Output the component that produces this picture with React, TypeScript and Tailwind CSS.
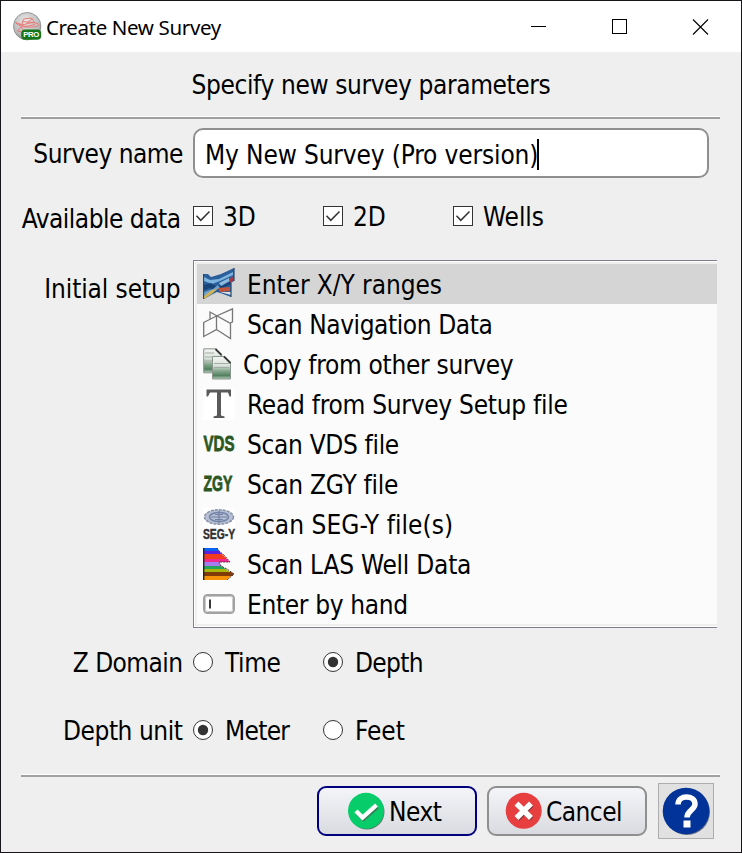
import type { ReactNode } from 'react';

type Row = { label: string; icon: ReactNode; text: string };

const FONT = "font-['DejaVu_Sans_Condensed','DejaVu_Sans',sans-serif] [font-stretch:75%] text-[26px] whitespace-nowrap leading-none";

function AppIcon() {
  return (
    <svg width="29" height="29" viewBox="0 0 29 29">
      <defs>
        <radialGradient id="ball" cx="0.45" cy="0.3" r="0.75">
          <stop offset="0" stopColor="#e8e8e8" />
          <stop offset="0.7" stopColor="#b9babb" />
          <stop offset="1" stopColor="#858788" />
        </radialGradient>
      </defs>
      <circle cx="14.2" cy="14.2" r="13.7" fill="url(#ball)" stroke="#858787" strokeWidth="0.8" />
      <path
        d="M2.500 10.500c5 2 8 2.500 11 1.500s7-2 11-.5c2 1 2 2 0 2.500-4 1.500-8 1-12 1s-8-2-10-4.500zM9 12l1.500-5 3.500-.5 5-.5 2.500 5M9.500 9.500l11 1M8 15l-3.500 4 4 1M13 12l6-5M6 12.500l7 2 9-2M8 15l3 4"
        fill="none"
        stroke="#ee6663"
        strokeWidth="0.8"
      />
      <rect x="8.2" y="17.4" width="20" height="10.4" rx="4" fill="#14751b" />
      <text x="18.3" y="25.3" textAnchor="middle" fontFamily="Liberation Sans, sans-serif" fontWeight="700" fontSize="7.8" fill="#fff" textLength="16">
        PRO
      </text>
    </svg>
  );
}

function RangesIcon() {
  return (
    <svg width="32" height="32" viewBox="0 0 32 32">
      <path d="M0 6h5l3 3 10-3L31 0v13l-3 2v14l-8-3-6-2-6 3-7 4z" fill="#2b5f9c" />
      <path d="M1 9l6 3 9-1 14-7v3l-13 6-8 3-8-3z" fill="#7db4df" />
      <path d="M1 17l7-2 6 4 5-4 9-2v3l-9 4-6 3-6-3-6 2z" fill="#174477" />
      <path d="M16 15l10-5 1 3-9 5z" fill="#8bb9df" />
      <path d="M1 24l9-3 5-4 2 3-8 5-8 3z" fill="#6fa0c9" />
      <path d="M1 28l8-6 5-1-4 4-9 6z" fill="#d5b451" />
      <path d="M15 20l12-1v4l-10 1z" fill="#c4533b" />
      <path d="M14 24l14 0v3l-11-3z" fill="#d9dfe3" />
      <path d="M26 11l5-3v4l-4 3z" fill="#a33a48" />
      <path d="M0.500 6v25M31 0v13M28 15v14" stroke="#284767" strokeWidth="1.2" />
    </svg>
  );
}

function NavigationIcon() {
  return (
    <svg width="32" height="32" viewBox="0 0 32 32" fill="none" stroke="#777" strokeWidth="1.3">
      <path d="M.7 14.500L13.500 8v13.500L.7 28.500zM13.500 8L29.500 .8v13l-2.500 1.500M7 11V4l20.500 11.500v15l-14-9" />
    </svg>
  );
}

function CopyIcon() {
  return (
    <svg width="32" height="32" viewBox="0 0 32 32">
      <defs>
        <linearGradient id="sheet" x1="0" y1="0" x2="0" y2="1">
          <stop offset="0" stopColor="#f3f5f3" />
          <stop offset="0.4" stopColor="#d9e4dc" />
          <stop offset="0.65" stopColor="#83a68b" />
          <stop offset="0.85" stopColor="#51805f" />
          <stop offset="1" stopColor="#b8d0bf" />
        </linearGradient>
      </defs>
      <path d="M.7 .8h12l6 6v18H.7z" fill="url(#sheet)" stroke="#8b928d" />
      <path d="M2 5h9M2 9h7M2 13h7" stroke="#a9aba9" />
      <path d="M9.500 8.500h12l6 6v16.500h-18z" fill="url(#sheet)" stroke="#89948c" />
      <path d="M12.500 1l6 6M21 8.500l6.500 6.500" stroke="#343634" strokeWidth="1.8" />
      <path d="M11 15.500h15M11 19.500h15" stroke="#a9aba9" />
    </svg>
  );
}

function LetterIcon() {
  return (
    <svg width="32" height="32" viewBox="0 0 32 32">
      <rect width="32" height="32" fill="#fff" />
      <path d="M3.500 1.500h24.500v7h-1.500l-1.500-4h-7V27.500l3.500 1v1.500H10.500v-1.500l3.500-1V4.500H7L5 8.500H3.500z" fill="#5a5a5a" />
    </svg>
  );
}

function WordIcon({ word }: { word: string }) {
  return (
    <svg width="32" height="32" viewBox="0 0 32 32" className="overflow-visible">
      <text
        x="0.500"
        y="22.500"
        fontFamily="Liberation Sans, sans-serif"
        fontSize="21.500"
        fontWeight="700"
        fill="#2c5722"
        stroke="#2c5722"
        strokeWidth="0.8"
        textLength={word === 'VDS' ? 31 : 29}
        lengthAdjust="spacingAndGlyphs"
      >
        {word}
      </text>
    </svg>
  );
}

function SegyIcon() {
  return (
    <svg width="32" height="32" viewBox="0 0 32 32" className="overflow-visible">
      <rect width="32" height="32" fill="#fff" />
      <ellipse cx="16" cy="9" rx="14.500" ry="7.200" fill="#b6bfd3" stroke="#8791aa" strokeWidth="1.500" strokeDasharray="3 1" />
      <ellipse cx="16" cy="9" rx="9.500" ry="4.600" fill="none" stroke="#7484a8" strokeWidth="1.500" />
      <path d="M8 9h16M12 6.500h8M12 11.500h8M16 3v12" stroke="#7181a5" strokeWidth="1.200" />
      <text x="0" y="31" fontFamily="Liberation Sans, sans-serif" fontSize="14.500" fontWeight="700" fill="#333" stroke="#333" strokeWidth="0.5" textLength="32" lengthAdjust="spacingAndGlyphs">
        SEG-Y
      </text>
    </svg>
  );
}

function WellLogIcon() {
  return (
    <svg width="32" height="32" viewBox="0 0 32 32">
      <path d="M1 0h13l2 3H1z" fill="#0a62f5" />
      <path d="M1 3h15l3 3H1z" fill="#5b20dc" />
      <path d="M1 6h18l5 5H1z" fill="#f43b20" />
      <path d="M1 11h23l3 3H1z" fill="#f0288f" />
      <path d="M1 14h15l2 4H1z" fill="#a57df0" />
      <path d="M1 18h17l5 3H1z" fill="#25a45c" />
      <path d="M1 21h22l4 3H1z" fill="#a8b70c" />
      <path d="M1 24h27l3 2-2 2H1z" fill="#803b08" />
      <path d="M1 28h27l-4 4H1z" fill="#f79208" />
      <path d="M.7 0v32" stroke="#222" strokeWidth="1.400" />
      <path d="M14 0l2 3 5 4 6 7H16l2 4 6 3 7 5-7 6" fill="none" stroke="#44202b" strokeWidth="0.900" strokeDasharray="2 1" />
    </svg>
  );
}

function HandIcon() {
  return (
    <svg width="32" height="32" viewBox="0 0 32 32">
      <rect x="1" y="7" width="30" height="18" rx="3.500" fill="#fff" stroke="#a2a2a2" strokeWidth="2" />
      <rect x="2.500" y="8.500" width="27" height="15" rx="2" fill="none" stroke="#c9c9c9" />
      <path d="M7 11.500v9" stroke="#222" strokeWidth="1.800" />
    </svg>
  );
}

const rows: Row[] = [
  { label: 'Enter X/Y ranges', icon: <RangesIcon />, text: 'pl-3 tracking-[-0.07px]' },
  { label: 'Scan Navigation Data', icon: <NavigationIcon />, text: 'pl-3 tracking-[-0.42px]' },
  { label: 'Copy from other survey', icon: <CopyIcon />, text: 'pl-2 tracking-[-0.3px]' },
  { label: 'Read from Survey Setup file', icon: <LetterIcon />, text: 'pl-3 tracking-[-0.27px]' },
  { label: 'Scan VDS file', icon: <WordIcon word="VDS" />, text: 'pl-3 tracking-[-0.33px]' },
  { label: 'Scan ZGY file', icon: <WordIcon word="ZGY" />, text: 'pl-3 tracking-[-0.25px]' },
  { label: 'Scan SEG-Y file(s)', icon: <SegyIcon />, text: 'pl-3 tracking-[0.05px]' },
  { label: 'Scan LAS Well Data', icon: <WellLogIcon />, text: 'pl-3 tracking-[-0.24px]' },
  { label: 'Enter by hand', icon: <HandIcon />, text: 'pl-3 tracking-[-0.33px]' },
];

function Check({ label }: { label: string }) {
  return (
    <div className="flex w-[130px] items-center">
      <svg width="20" height="20" viewBox="0 0 20 20" className="mr-[10px] shrink-0">
        <rect x="0.500" y="0.500" width="19" height="19" fill="#fff" stroke="#333" />
        <path d="M3.500 9.700l4.300 4.600 8.700-8.800" fill="none" stroke="#333" strokeWidth="1.500" />
      </svg>
      <span className="pt-[2px] tracking-[-0.05px]">{label}</span>
    </div>
  );
}

function Radio({ label, on = false, text }: { label: string; on?: boolean; text: string }) {
  return (
    <div className="flex w-[130px] items-center">
      <svg width="20" height="20" viewBox="0 0 20 20" className="mr-3 shrink-0">
        <circle cx="10" cy="10" r="9.500" fill="#fff" stroke="#333" />
        {on && <circle cx="10" cy="10" r="5.200" fill="#333" />}
      </svg>
      <span className={`pt-[2px] ${text}`}>{label}</span>
    </div>
  );
}

function Rule() {
  return <div className="ml-5 h-[3px] w-[699px] border-t border-white bg-[#a0a0a0]" />;
}

export default function App() {
  return (
    <div className={`flex h-[853px] w-[742px] flex-col overflow-hidden border border-[#17151a] bg-[#efefef] text-black ${FONT}`}>
      <header className="flex h-[51px] shrink-0 items-center bg-white pl-3">
        <AppIcon />
        <span className="ml-[4px] flex-1 pt-px font-['Noto_Sans',sans-serif] text-[20.5px] tracking-[-0.36px]">Create New Survey</span>
        <svg width="180" height="20" viewBox="0 0 180 20" fill="none" stroke="#000" className="mr-[31px]">
          <path d="M0 9.500h15" transform="translate(1 0)" />
          <rect x="82.500" y="2.500" width="14" height="14" />
          <path d="M163 2.500l15 15M178 2.500l-15 15" strokeWidth="1.100" />
        </svg>
      </header>

      <div className="flex h-[64px] justify-center pt-5">
        <h1 className="tracking-[-0.39px]">Specify new survey parameters</h1>
      </div>
      <Rule />

      <div className="mt-[9px] flex h-[50px] items-center">
        <span className="w-[192px] pt-[2px] pr-[10px] text-right tracking-[-0.5px]">Survey name</span>
        <div className="flex h-[50px] w-[516px] items-center rounded-[10px] border-2 border-[#8f8f8f] bg-white pt-[2px] pl-[10px]">
          <span className="pt-[2px] tracking-[-0.14px]">My New Survey (Pro version)</span>
          <span className="-ml-px h-[31px] w-[2px] bg-black" />
        </div>
      </div>

      <div className="mt-[18px] flex h-10 items-center">
        <span className="w-[192px] pt-[6px] pr-[12.5px] text-right tracking-[-0.5px]">Available data</span>
        <Check label="3D" />
        <Check label="2D" />
        <Check label="Wells" />
      </div>

      <div className="mt-[24px] flex h-[368px]">
        <span className="w-[192px] pt-4 pr-[12.5px] text-right tracking-[-0.1px]">Initial setup</span>
        <div className="w-[524px] border-y border-l border-[#80808c]">
          <div className="h-[366px] border-y border-l border-white bg-[#efefef] py-[2px] pl-[2px]">
            <div className="h-[360px] bg-[#fbfbfb]">
              {rows.map((row, i) => (
                <div key={row.label} className={`flex h-10 items-center pl-[6px] ${i === 0 ? 'bg-[#d5d5d5]' : ''}`}>
                  {row.icon}
                  <span className={`pt-[2px] ${row.text}`}>{row.label}</span>
                </div>
              ))}
            </div>
          </div>
        </div>
      </div>

      <div className="mt-[14px] flex h-10 items-center">
        <span className="w-[192px] pt-[2px] pr-[10.5px] text-right tracking-[-0.57px]">Z Domain</span>
        <Radio label="Time" text="tracking-[-0.4px]" />
        <Radio label="Depth" on text="tracking-[-0.7px]" />
      </div>
      <div className="mt-[28px] flex h-10 items-center">
        <span className="w-[192px] pt-[2px] pr-[10.5px] text-right tracking-[-0.45px]">Depth unit</span>
        <Radio label="Meter" on text="tracking-[-0.7px]" />
        <Radio label="Feet" text="tracking-[-0.05px]" />
      </div>

      <div className="mt-[24px]">
        <Rule />
      </div>
      <footer className="mt-[6px] flex h-14 items-center pl-[316px]">
        <button className="flex h-[50px] w-[160px] items-center rounded-[9px] border-2 border-[#00007f] bg-linear-to-b from-[#f4f5f9] to-[#dadbe0] pl-7">
          <svg width="38" height="38" viewBox="0 0 38 38">
            <circle cx="20" cy="20" r="17.500" fill="#617a6d" />
            <circle cx="19" cy="18.800" r="18" fill="#06cc69" />
            <path d="M10 21l6.500 6 14-12" fill="none" stroke="#33835a" strokeWidth="4" />
            <path d="M9 19l6.500 6.500L29.500 13" fill="none" stroke="#fff" strokeWidth="4.300" />
          </svg>
          <span className="pt-[2px] pl-1 tracking-[-0.5px]">Next</span>
        </button>
        <button className="ml-[10px] flex h-[50px] w-[160px] items-center rounded-[9px] border-2 border-[#8f8f8f] bg-linear-to-b from-[#f4f5f9] to-[#dadbe0] pl-4">
          <svg width="38" height="38" viewBox="0 0 38 38">
            <circle cx="18.700" cy="18.800" r="18" fill="#e73e3f" />
            <path d="M12 12l14 14M26 12L12 26" stroke="#7e3035" strokeWidth="5" transform="translate(.5 1)" />
            <path d="M11.500 11.500l14.500 14.500M26 11.500L11.500 26" stroke="#fff" strokeWidth="5.500" />
          </svg>
          <span className="pt-[2px] pl-[3px] tracking-[-0.55px]">Cancel</span>
        </button>
        <button className="ml-[11px] flex h-14 w-14 items-center justify-center border border-[#adadad] bg-[#e1e1e1]">
          <svg width="50" height="50" viewBox="0 0 50 50">
            <circle cx="26" cy="26" r="23" fill="#687184" />
            <circle cx="25" cy="25" r="23.300" fill="#013399" />
            <path d="M17 18.500c0-5 4-7.500 8.500-7.500s8.500 2.500 8.500 7c0 6-8 6.500-8 13.500" fill="none" stroke="#fff" strokeWidth="5.500" />
            <rect x="22.500" y="34.500" width="7" height="7" fill="#fff" />
          </svg>
        </button>
      </footer>
    </div>
  );
}
